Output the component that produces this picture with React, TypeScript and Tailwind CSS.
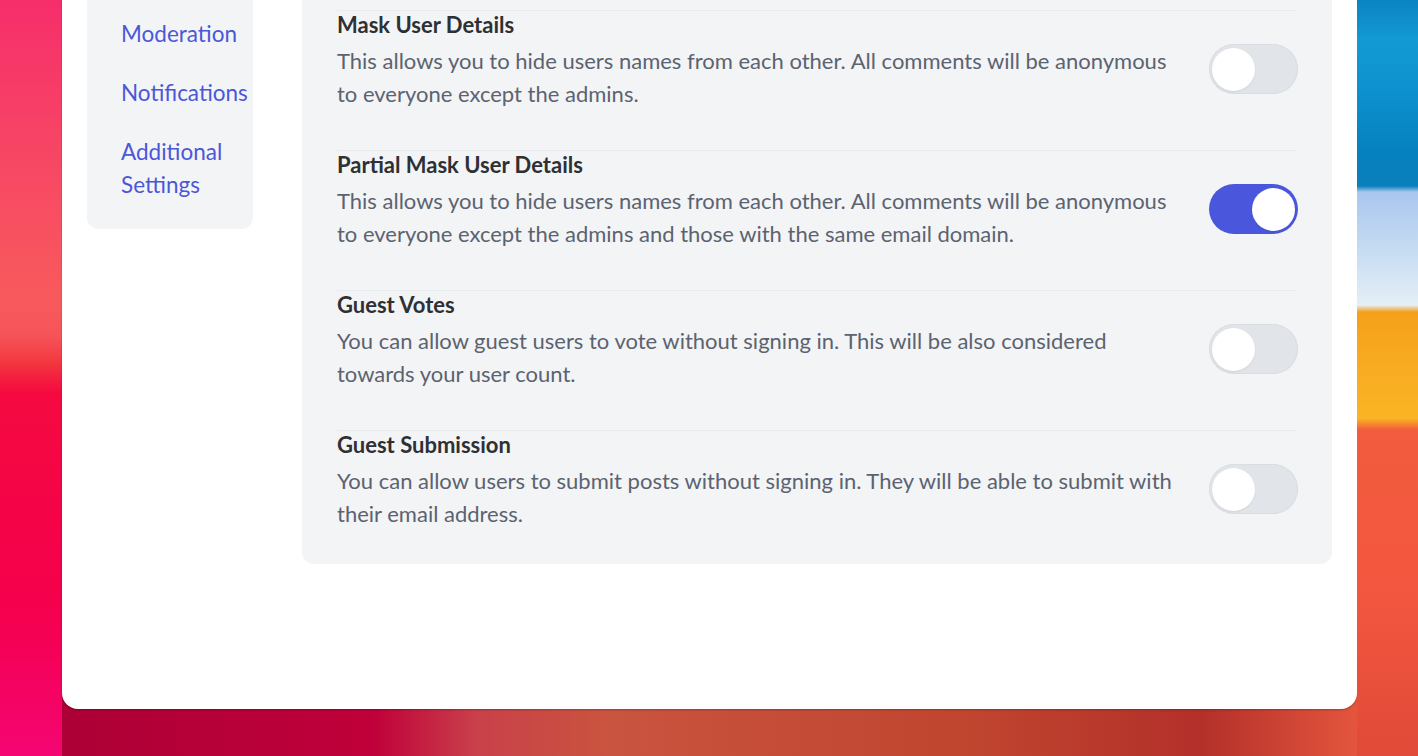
import React from 'react'

type Setting = {
  title: string
  desc: string
  on: boolean
}

const settings: Setting[] = [
  {
    title: 'Mask User Details',
    desc: 'This allows you to hide users names from each other. All comments will be anonymous to everyone except the admins.',
    on: false,
  },
  {
    title: 'Partial Mask User Details',
    desc: 'This allows you to hide users names from each other. All comments will be anonymous to everyone except the admins and those with the same email domain.',
    on: true,
  },
  {
    title: 'Guest Votes',
    desc: 'You can allow guest users to vote without signing in. This will be also considered towards your user count.',
    on: false,
  },
  {
    title: 'Guest Submission',
    desc: 'You can allow users to submit posts without signing in. They will be able to submit with their email address.',
    on: false,
  },
]

function Toggle({ on }: { on: boolean }) {
  return (
    <button
      type="button"
      className={`flex h-[50px] w-[89px] shrink-0 items-center rounded-full px-[3px] ${
        on ? 'justify-end bg-[#4a57dc]' : 'justify-start bg-[#e1e4e8] ring-1 ring-inset ring-[#dadde2]'
      }`}
    >
      <span className="h-[43px] w-[43px] rounded-full bg-white shadow-[0_1px_2px_rgba(0,0,0,0.08)]" />
    </button>
  )
}

export default function App() {
  return (
    <div className="flex h-[756px] w-full overflow-hidden font-['Lato','Noto_Sans',sans-serif]">
      {/* left wallpaper strip */}
      <div className="w-[62px] shrink-0 bg-[linear-gradient(to_bottom,#f62e6b_0px,#f74a63_180px,#f85a5c_300px,#f6545a_335px,#f2383f_362px,#f50a40_392px,#f4004c_600px,#f40572_756px)]" />

      {/* window + bottom strip */}
      <div className="flex flex-1 flex-col bg-[linear-gradient(to_right,#ad0036_0%,#c0003a_24%,#c9404a_32%,#c9543f_42%,#c0452f_70%,#b3302a_88%,#e4553d_100%)]">
        <div className="flex h-[709px] items-start rounded-b-2xl bg-white px-[25px] shadow-[0_1px_2px_rgba(0,0,0,0.25)]">
          {/* sidebar */}
          <nav className="flex w-[166px] shrink-0 flex-col gap-[26px] rounded-b-xl bg-[#f3f4f6] pb-[28px] pl-[34px] pt-[17px] text-[22.5px] leading-[33px] text-[#4b57d9]">
            <a>Moderation</a>
            <a>Notifications</a>
            <a>
              Additional
              <br />
              Settings
            </a>
          </nav>

          {/* settings panel */}
          <div className="ml-[49px] flex-1 rounded-b-xl bg-[#f3f4f6] px-[35px] pt-[10px]">
            {settings.map((s) => (
              <div
                key={s.title}
                className="flex items-start gap-[32px] border-t border-[#e8eaed] pb-[40px] last:pb-[34px]"
              >
                <div className="flex-1">
                  <h3 className="text-[22px] font-bold leading-[27px] text-[#2e3034]">{s.title}</h3>
                  <p className="mt-[6px] text-[22px] leading-[33px] text-[#5b6370]">{s.desc}</p>
                </div>
                <div className="-mr-px mt-[33px]">
                  <Toggle on={s.on} />
                </div>
              </div>
            ))}
          </div>
        </div>
        <div className="flex-1" />
      </div>

      {/* right wallpaper strip */}
      <div className="w-[61px] shrink-0 bg-[linear-gradient(to_bottom,#0a84c2_0px,#1399d3_40px,#0d92cf_90px,#0681bf_150px,#0a7fbc_186px,#a9c6ee_192px,#c6dcf2_250px,#e4eff7_305px,#f5a01a_312px,#f8ae22_380px,#f9b523_418px,#f35c3e_430px,#f2563f_600px,#e04a38_756px)]" />
    </div>
  )
}
